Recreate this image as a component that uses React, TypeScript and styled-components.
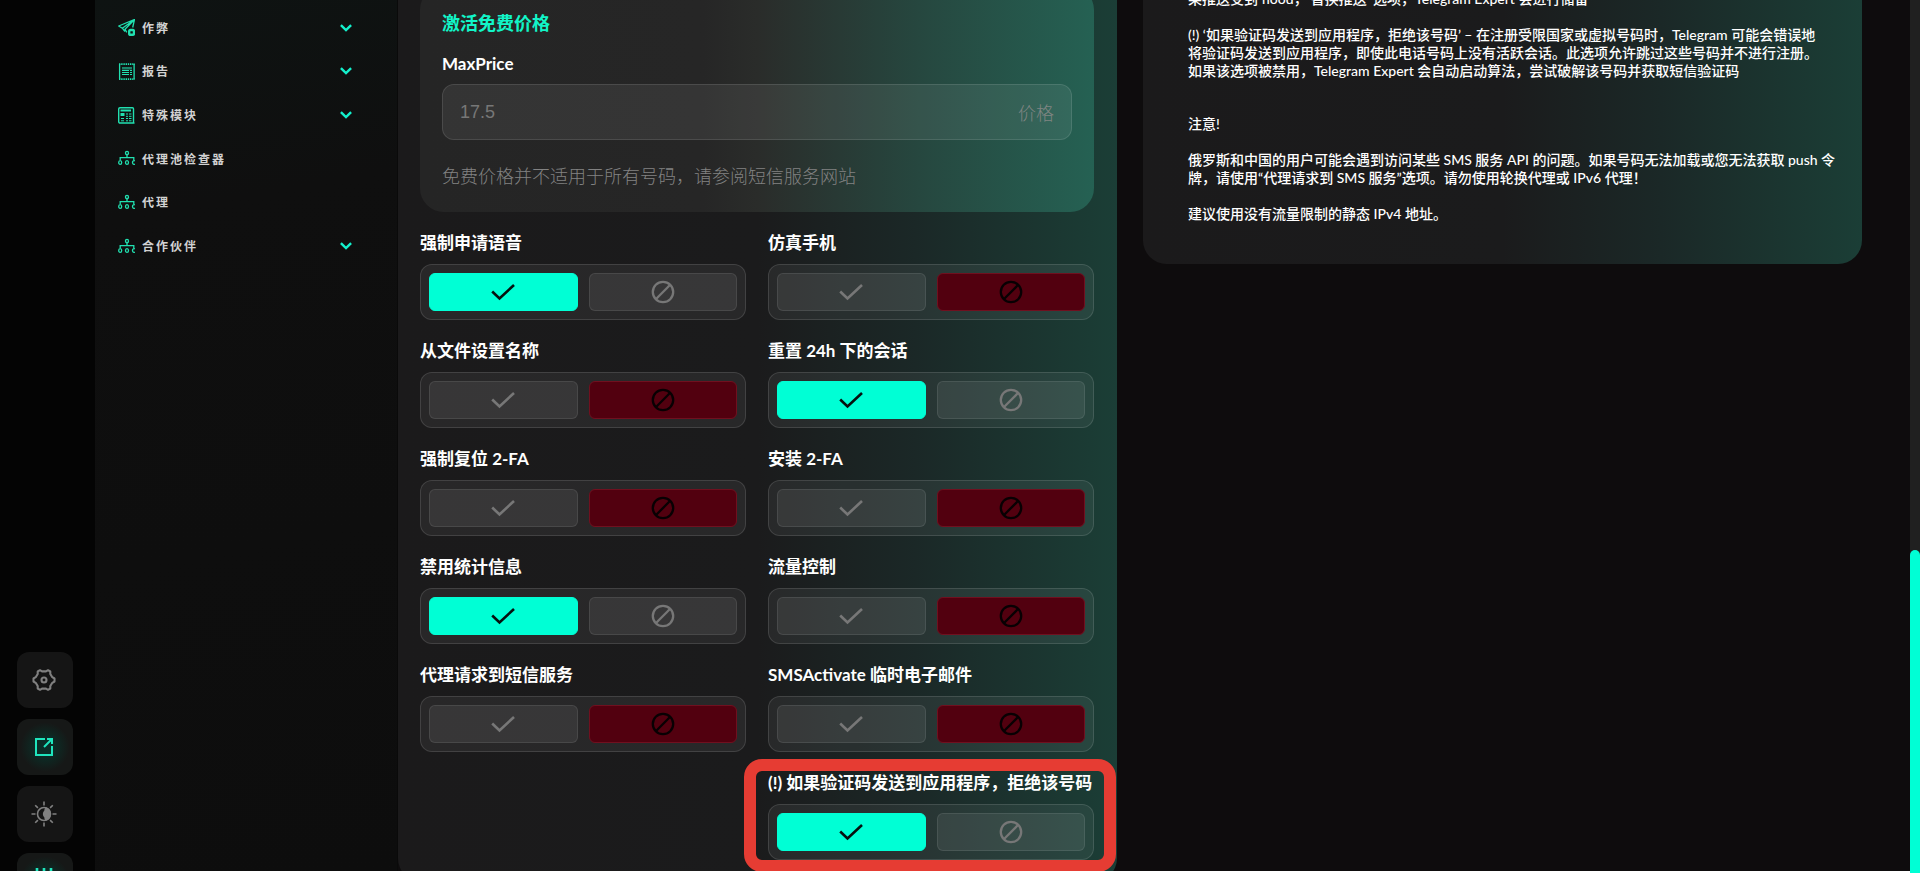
import React, { useState } from "react";
import styled, { createGlobalStyle, css } from "styled-components";

const teal = "#00ffd5";
const iconTeal = "#21e0b0";
const uiFont = `Lato, "Noto Sans CJK SC", sans-serif`;

const GlobalStyle = createGlobalStyle`
  *, *::before, *::after { box-sizing: border-box; }
  html, body { margin: 0; background: #ffffff; }
  body { overflow: hidden; font-family: ${uiFont}; }
  button, input { font: inherit; }
`;

const Shell = styled.div`
  display: flex;
  height: 100vh;
  overflow: hidden;
`;

const Page = styled.div`
  display: flex;
  flex: 1;
  min-width: 0;
  margin-bottom: 2px;
  overflow: hidden;
  background: #0e0c0d;
  color: #ffffff;
`;

const Rail = styled.aside`
  display: flex;
  flex: 0 0 95px;
  flex-direction: column;
  align-items: flex-start;
  justify-content: flex-end;
  gap: 11px;
  padding-left: 17px;
  background: #040404;
`;

const RailButton = styled.button<{ $active?: boolean }>`
  display: flex;
  flex: none;
  align-items: center;
  justify-content: center;
  width: 56px;
  height: 56px;
  padding: 0 2px 0 0;
  border: 0;
  border-radius: 12px;
  background: #151515;
  color: ${(p) => (p.$active ? "#1fe5bd" : "#808080")};
  cursor: pointer;

  &:last-child {
    margin-bottom: -38px;
  }

  ${(p) =>
    p.$active &&
    css`
      background: radial-gradient(circle, #0b2e27 20%, #161817 62%);
    `}
`;

const Sidebar = styled.nav`
  flex: 0 0 303px;
  padding: 6px 45px 0 23px;
  border-right: 1px solid #0a0a0a;
  background: linear-gradient(170deg, #0e1312 0%, #0f0f0f 24%, #0d0d0d 100%);
`;

const NavList = styled.ul`
  display: grid;
  grid-auto-rows: 1fr;
  height: 262px;
  margin: 0;
  padding: 0;
  list-style: none;
`;

const NavLink = styled.a`
  display: flex;
  align-items: center;
  gap: 7px;
  height: 100%;
  color: #d2d2d2;
  font-family: "Noto Sans CJK SC", sans-serif;
  font-size: 12px;
  font-weight: 700;
  letter-spacing: 2px;
  line-height: 18px;
  text-decoration: none;

  & > svg:first-child { flex: none; }
  & > span { flex: 1; }
`;

const Main = styled.main`
  display: grid;
  flex: 1;
  grid-template-columns: minmax(0, 1fr) minmax(0, 1fr);
  align-items: start;
  gap: 26px;
  min-width: 0;
  padding-right: 48px;
`;

const panelSurface = css`
  background: linear-gradient(90deg, #1b1a1b 0%, #1b1b1c 50%, #1b2827 72%, #1b3e36 100%);
  border-radius: 0 0 24px 24px;
`;

const FormPanel = styled.form`
  ${panelSurface}
  padding: 0 23px 22px 22px;
`;

const PriceCard = styled.section`
  margin-top: -14px;
  padding: 26px 22px 26px;
  border-radius: 24px;
  background: linear-gradient(90deg, #252525 0%, #262626 42%, #2a2c2a 50%, #26473f 74%, #256153 100%);
`;

const CardTitle = styled.h2`
  margin: 0 0 19px;
  color: #12f5c8;
  font-size: 18px;
  font-weight: 700;
  line-height: 22px;
`;

const FieldLabel = styled.label`
  display: block;
  font-size: 17px;
  font-weight: 700;
  line-height: 22px;
`;

const PriceBox = styled.div`
  display: flex;
  align-items: center;
  gap: 12px;
  height: 56px;
  margin-top: 9px;
  padding: 0 17px;
  border: 1px solid rgba(255, 255, 255, 0.11);
  border-radius: 12px;
  background: rgba(255, 255, 255, 0.07);
  color: #808583;
  font-family: "Liberation Sans", "Noto Sans CJK SC", sans-serif;
  font-size: 18px;
  font-weight: 300;
`;

const PriceInput = styled.input`
  flex: 1;
  min-width: 0;
  padding: 0;
  border: 0;
  outline: 0;
  background: transparent;
  color: inherit;

  &::placeholder { color: #777777; opacity: 1; }
`;

const CardNote = styled.p`
  margin: 24px 0 0;
  color: #828282;
  font-family: "Noto Sans CJK SC", sans-serif;
  font-size: 18px;
  font-weight: 300;
  line-height: 22px;
`;

const OptionGrid = styled.div`
  display: grid;
  grid-template-columns: minmax(0, 1fr) minmax(0, 1fr);
  gap: 20px 22px;
  margin-top: 20px;
`;

const Option = styled.div<{ $marked?: boolean }>`
  position: relative;
  ${(p) => p.$marked && "grid-column: 2;"}
`;

const OptionLabel = styled.h3`
  margin: 0;
  font-size: 17px;
  font-weight: 700;
  line-height: 22px;
  white-space: nowrap;
`;

const ToggleBox = styled.div`
  display: flex;
  gap: 11px;
  height: 56px;
  margin-top: 10px;
  padding: 8px;
  border: 1px solid rgba(255, 255, 255, 0.12);
  border-radius: 12px;
  background: rgba(255, 255, 255, 0.06);
`;

const ToggleButton = styled.button<{ $tone: "idle" | "yes" | "no" }>`
  display: flex;
  flex: 1;
  align-items: center;
  justify-content: center;
  padding: 0;
  border: 1px solid rgba(255, 255, 255, 0.09);
  border-radius: 6px;
  background: rgba(255, 255, 255, 0.07);
  color: #777777;
  cursor: pointer;

  ${(p) =>
    p.$tone === "yes" &&
    css`
      border-color: ${teal};
      background: ${teal};
      color: #06110f;
    `}
  ${(p) =>
    p.$tone === "no" &&
    css`
      border-color: #70101f;
      background: #52000f;
      color: #080003;
    `}
`;

const Marker = styled.div`
  position: absolute;
  inset: -13px -22px -12px -24px;
  border: 12px solid #e63c33;
  border-radius: 18px;
  pointer-events: none;
`;

const InfoPanel = styled.article`
  ${panelSurface}
  padding: 0 20px 41px 45px;
`;

const InfoText = styled.div`
  margin-top: -10px;
  font-size: 14px;
  font-weight: 500;
  line-height: 18px;

  p { margin: 0 0 18px; }
  p:last-child { margin-bottom: 0; }
`;

const Spacer = styled.div`
  height: 17px;
`;

const ScrollTrack = styled.div`
  display: flex;
  flex: 0 0 10px;
  flex-direction: column;
  justify-content: flex-end;
  background: #202020;
`;

const ScrollThumb = styled.div`
  height: 37%;
  border-radius: 5px 5px 0 0;
  background: ${teal};
`;

const PlaneIcon = () => (
  <svg width="17" height="17" viewBox="0 0 17 17" fill="none" stroke={iconTeal} strokeWidth="1.3" strokeLinejoin="round">
    <path d="M16.5.5.7 7l3.6 2.2L16.5.5 7 10.2l1.8 3.2M4.3 9.2 7 12.5M16.5.5l-1.8 8" />
    <rect x="11.2" y="11" width="4.8" height="4.8" rx="1.4" strokeWidth="2.4" />
  </svg>
);

const ReportIcon = () => (
  <svg width="17" height="17" viewBox="0 0 17 17" fill="none" stroke={iconTeal}>
    <path d="M1.6 1v15M16.1 1v15" strokeWidth="1.3" />
    <path d="M1 1.1h16M1 16.2h16" strokeWidth="1.8" strokeDasharray="1.4 .8" />
    <path d="M4 7.5h7M4 9.5h7M4 11.5h7M12 7.5h2M12 9.5h2M12 11.5h2" />
    <path d="M4 4h10v2.5H4z" fill={iconTeal} stroke="none" opacity=".55" />
  </svg>
);

const ModuleIcon = () => (
  <svg width="17" height="17" viewBox="0 0 17 17" fill="none" stroke={iconTeal}>
    <path d="M2 .8h12.5c.6 0 1 .4 1 1v13.4c0 .5.4.8 1 .8H2c-.7 0-1.3-.5-1.3-1.2V2C.7 1.300 1.300.8 2 .8z" strokeWidth="1.4" />
    <path d="M2.500 3.500H13" strokeWidth="2" />
    <path d="M2.500 7.500h4" strokeWidth="3" />
    <path d="M8 7h2M11 7h2.500M8 9.300h2M11 9.300h2.500M3 11.500h3M8 11.500h2M11 11.500h2.500M3 13.800h3M8 13.800h2M11 13.800h2.500" />
  </svg>
);

const NetworkIcon = () => (
  <svg width="17" height="17" viewBox="0 0 17 17" fill="none" stroke={iconTeal} strokeWidth="1.3">
    <ellipse cx="9" cy="3" rx="1.500" ry="1.700" />
    <path d="M9 4.700v3M2.200 10V7.700h13.600V10" />
    <ellipse cx="2.200" cy="12.500" rx="1.500" ry="1.900" />
    <ellipse cx="9" cy="12.500" rx="1.500" ry="1.900" />
    <path d="M17 11a1.500 1.900 0 1 0 0 3" />
  </svg>
);

const ChevronIcon = () => (
  <svg width="12" height="8" viewBox="0 0 12 8" fill="none" stroke="#14f0cc" strokeWidth="2.400">
    <path d="m.9 1.100 5.100 5 5.100-5" />
  </svg>
);

const CheckIcon = () => (
  <svg width="24" height="18" viewBox="0 0 24 18" fill="none" stroke="currentColor" strokeWidth="2.600" aria-hidden="true">
    <path d="m1.200 8.500 7.300 7L23 2" />
  </svg>
);

const BanIcon = () => (
  <svg width="24" height="24" viewBox="0 0 24 24" fill="none" stroke="currentColor" strokeWidth="2.300" aria-hidden="true">
    <circle cx="12" cy="12" r="10.200" />
    <path d="M4.800 19.200 19.200 4.800" />
  </svg>
);

const GearIcon = () => (
  <svg width="24" height="24" viewBox="0 0 24 24" fill="none" stroke="currentColor" strokeWidth="2.100" strokeLinejoin="round">
    <path d="M8 2.200 10 3.400h4l2-1.200 2.300 1.300V6l2 3.200 2.200 1.300v3l-2.200 1.300-2 3.200v2.500L16 21.800l-2-1.200h-4l-2 1.200-2.300-1.300V18l-2-3.200-2.200-1.300v-3l2.200-1.300 2-3.200V3.500z" />
    <circle cx="12" cy="12" r="2.500" />
  </svg>
);

const ExternalIcon = () => (
  <svg width="20" height="20" viewBox="0 0 20 20" fill="none" stroke="currentColor" strokeWidth="2">
    <path d="M11 2H2v16h16V9M10 10l7-7M13 2h5v5" />
  </svg>
);

const ThemeIcon = () => (
  <svg width="26" height="26" viewBox="0 0 26 26" fill="none" stroke="currentColor" strokeWidth="1.600">
    <circle cx="13" cy="13" r="6.500" />
    <path d="M15 7.200a6.200 6.200 0 0 1 0 11.600A5 5 0 0 1 14 16a4 4 0 0 1 0-6 5 5 0 0 1 1-2.800z" fill="currentColor" />
    <path d="M13 .5v4M13 21.500v4M.5 13h4M21.500 13h4M4.200 4.200l2.700 2.700M19.100 19.100l2.700 2.700M4.200 21.800l2.700-2.700M19.100 6.900l2.700-2.700" />
  </svg>
);

const MenuBarsIcon = () => (
  <svg width="20" height="26" viewBox="0 0 20 26" fill="none" stroke="currentColor" strokeWidth="2.600">
    <path d="M3 0v26M10 0v26M17 0v26" />
  </svg>
);

const navItems = [
  { text: "作弊", icon: <PlaneIcon />, open: true },
  { text: "报告", icon: <ReportIcon />, open: true },
  { text: "特殊模块", icon: <ModuleIcon />, open: true },
  { text: "代理池检查器", icon: <NetworkIcon />, open: false },
  { text: "代理", icon: <NetworkIcon />, open: false },
  { text: "合作伙伴", icon: <NetworkIcon />, open: true },
];

const options = [
  { text: "强制申请语音", on: true },
  { text: "仿真手机", on: false },
  { text: "从文件设置名称", on: false },
  { text: "重置 24h 下的会话", on: true },
  { text: "强制复位 2-FA", on: false },
  { text: "安装 2-FA", on: false },
  { text: "禁用统计信息", on: true },
  { text: "流量控制", on: false },
  { text: "代理请求到短信服务", on: false },
  { text: "SMSActivate 临时电子邮件", on: false },
  { text: "(!) 如果验证码发送到应用程序，拒绝该号码", on: true, marked: true },
];

function ToggleOption({ text, initial, marked }: { text: string; initial: boolean; marked?: boolean }) {
  const [on, setOn] = useState(initial);
  return (
    <Option $marked={marked} role="group" aria-label={text}>
      <OptionLabel>{text}</OptionLabel>
      <ToggleBox>
        <ToggleButton type="button" aria-label="启用" aria-pressed={on} $tone={on ? "yes" : "idle"} onClick={() => setOn(true)}>
          <CheckIcon />
        </ToggleButton>
        <ToggleButton type="button" aria-label="禁用" aria-pressed={!on} $tone={on ? "idle" : "no"} onClick={() => setOn(false)}>
          <BanIcon />
        </ToggleButton>
      </ToggleBox>
      {marked && <Marker />}
    </Option>
  );
}

export default function App() {
  return (
    <>
      <GlobalStyle />
      <Shell>
        <Page>
          <Rail>
            <RailButton type="button" aria-label="设置"><GearIcon /></RailButton>
            <RailButton type="button" aria-label="打开" $active><ExternalIcon /></RailButton>
            <RailButton type="button" aria-label="主题"><ThemeIcon /></RailButton>
            <RailButton type="button" aria-label="菜单" $active><MenuBarsIcon /></RailButton>
          </Rail>
          <Sidebar>
            <NavList>
              {navItems.map((item) => (
                <li key={item.text}>
                  <NavLink href="#">
                    {item.icon}
                    <span>{item.text}</span>
                    {item.open && <ChevronIcon />}
                  </NavLink>
                </li>
              ))}
            </NavList>
          </Sidebar>
          <Main>
            <FormPanel>
              <PriceCard>
                <CardTitle>激活免费价格</CardTitle>
                <FieldLabel htmlFor="max-price">MaxPrice</FieldLabel>
                <PriceBox>
                  <PriceInput id="max-price" placeholder="17.5" />
                  <span>价格</span>
                </PriceBox>
                <CardNote>免费价格并不适用于所有号码，请参阅短信服务网站</CardNote>
              </PriceCard>
              <OptionGrid>
                {options.map((o) => (
                  <ToggleOption key={o.text} text={o.text} initial={o.on} marked={o.marked} />
                ))}
              </OptionGrid>
            </FormPanel>
            <InfoPanel>
              <InfoText>
                <p>果推送受到 flood，‘替换推送’ 选项，Telegram Expert 会进行储备</p>
                <p>
                  (!) ‘如果验证码发送到应用程序，拒绝该号码’ – 在注册受限国家或虚拟号码时，Telegram 可能会错误地
                  <br />
                  将验证码发送到应用程序，即使此电话号码上没有活跃会话。此选项允许跳过这些号码并不进行注册。
                  <br />
                  如果该选项被禁用，Telegram Expert 会自动启动算法，尝试破解该号码并获取短信验证码
                </p>
                <Spacer />
                <p>注意!</p>
                <p>
                  俄罗斯和中国的用户可能会遇到访问某些 SMS 服务 API 的问题。如果号码无法加载或您无法获取 push 令
                  <br />
                  牌，请使用“代理请求到 SMS 服务”选项。请勿使用轮换代理或 IPv6 代理！
                </p>
                <p>建议使用没有流量限制的静态 IPv4 地址。</p>
              </InfoText>
            </InfoPanel>
          </Main>
        </Page>
        <ScrollTrack aria-hidden="true"><ScrollThumb /></ScrollTrack>
      </Shell>
    </>
  );
}
